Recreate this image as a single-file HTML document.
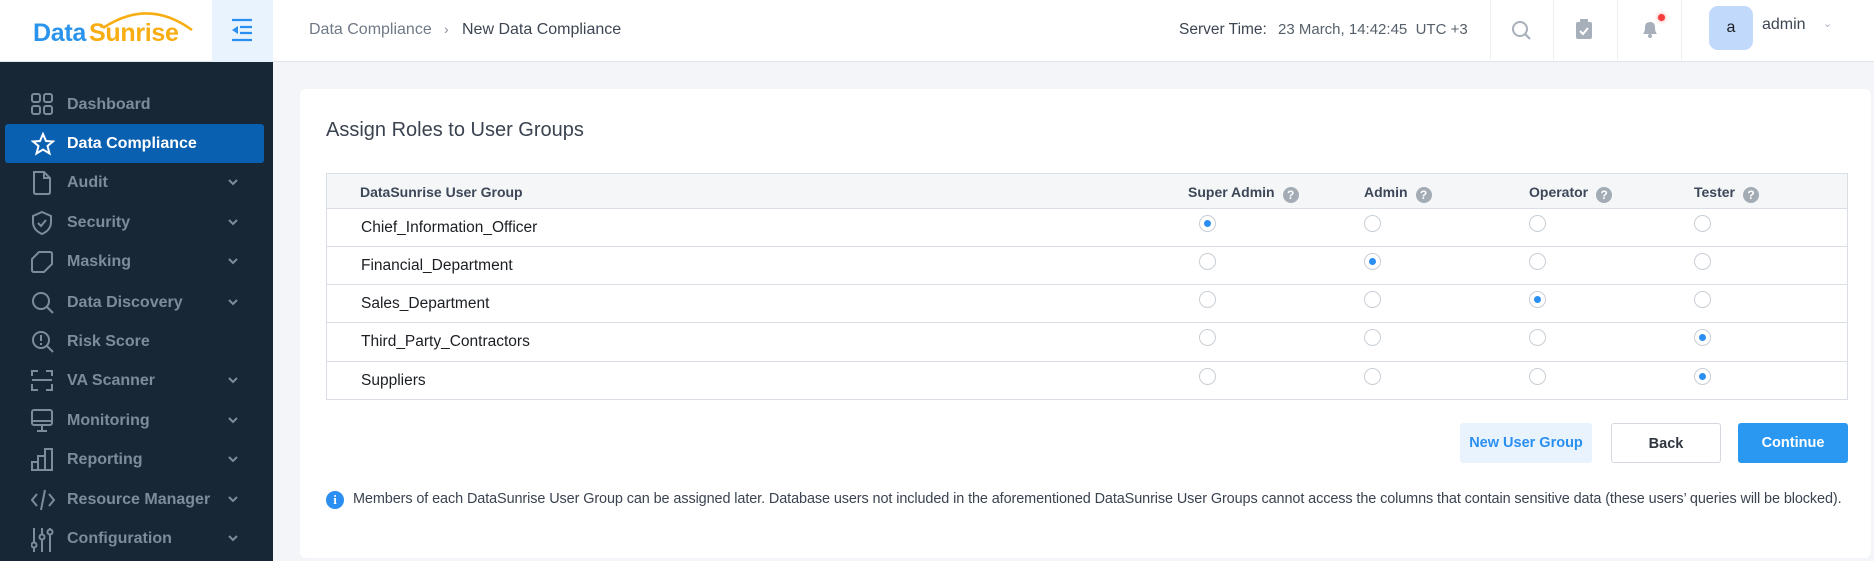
<!DOCTYPE html>
<html><head><meta charset="utf-8"><style>
*{box-sizing:border-box;margin:0;padding:0}
body{width:1874px;height:561px;overflow:hidden;background:#f3f5f8;font-family:"Liberation Sans",sans-serif;position:relative}
.abs{position:absolute}
#hdr{left:0;top:0;width:1874px;height:62px;background:#fff;border-bottom:1px solid #e2e6ea}
#side{left:0;top:62px;width:273px;height:499px;background:#182736}
.mi{position:absolute;left:0;width:273px;height:39px;color:#7d8c9b;font-size:16px;font-weight:bold}
.mi span{position:absolute;left:67px;top:11px}
.mi svg.ic{position:absolute;left:31px;top:8px}
.mi .ch{position:absolute;left:228px;top:15px}
.act{left:5px !important;width:259px !important;background:#0a60b0;border-radius:3px;color:#fff}
.act span{left:62px}
.act svg.ic{left:26px}
#card{left:300px;top:89px;width:1571px;height:469px;background:#fff;border-radius:6px}
.row{position:absolute;left:326px;width:1522px;border:1px solid #d9dfe5;border-top:none}
.txt{position:absolute;font-size:15.5px;color:#1b1e22;left:34px}
.rad{position:absolute;width:17px;height:17px;border:1px solid #c9cfd5;border-radius:50%;background:#fff}
.rad.on::after{content:"";position:absolute;left:4px;top:4px;width:7px;height:7px;border-radius:50%;background:#2a8ff0}
.hl{position:absolute;top:10px;font-size:14px;font-weight:bold;color:#3d4757}
.q{display:inline-block;width:16px;height:16px;border-radius:50%;background:#a3abb5;color:#fff;font-size:12px;text-align:center;line-height:16px;margin-left:8px;vertical-align:-2px}
.btn{position:absolute;top:423px;height:40px;border-radius:3px;font-size:14.5px;font-weight:bold;text-align:center;line-height:40px}
.dv{position:absolute;top:0;width:1px;height:60px;background:#eef0f3}
</style></head><body>
<div id="hdr" class="abs">
  <div class="abs" style="left:33px;top:19px;font-size:25px;font-weight:bold;letter-spacing:-0.3px"><span style="color:#2a93ec">Data</span><span style="color:#f8ad12;margin-left:3px">Sunrise</span></div>
  <svg class="abs" style="left:100px;top:6px" width="96" height="30"><path d="M3 22 Q48 -8 92 24" fill="none" stroke="#f8ad12" stroke-width="2.6"/></svg>
  <div class="abs" style="left:212px;top:0;width:61px;height:62px;background:#e9f3fd"></div>
  <svg class="abs" style="left:230px;top:18px" width="24" height="24"><path d="M2 2H22M10 9H22M10 15H22M2 22H22" stroke="#2a8ff0" stroke-width="2.2"/><path d="M2 12L8 8V16Z" fill="#2a8ff0"/></svg>
  <div class="abs" style="left:309px;top:21px;font-size:16px;color:#6f7a86">Data Compliance</div>
  <div class="abs" style="left:444px;top:21px;font-size:14px;color:#8a939d">›</div>
  <div class="abs" style="left:462px;top:21px;font-size:16px;color:#3d4652">New Data Compliance</div>
  <div class="abs" style="left:1179px;top:21px;font-size:15.5px;color:#3d4652">Server Time:</div>
  <div class="abs" style="left:1278px;top:21px;font-size:15px;color:#56606b">23 March, 14:42:45&nbsp; UTC +3</div>
  <div class="dv" style="left:1490px"></div><div class="dv" style="left:1553px"></div><div class="dv" style="left:1617px"></div><div class="dv" style="left:1681px"></div>
  <svg class="abs" style="left:1511px;top:20px" width="22" height="22"><circle cx="9" cy="9" r="7" fill="none" stroke="#a7b0ba" stroke-width="2"/><path d="M14 14L19 19" stroke="#a7b0ba" stroke-width="2.2"/></svg>
  <svg class="abs" style="left:1576px;top:19px" width="16" height="20"><rect x="0" y="3" width="16" height="17" rx="2" fill="#a7b0ba"/><rect x="4" y="0" width="8" height="5" rx="1" fill="#a7b0ba"/><path d="M4 12L7 15L12 9" fill="none" stroke="#fff" stroke-width="2"/></svg>
  <svg class="abs" style="left:1640px;top:19px" width="20" height="20"><path d="M3 15Q5 13 5 8Q5 3 10 3Q15 3 15 8Q15 13 17 15Z" fill="#a7b0ba"/><circle cx="10" cy="17" r="2" fill="#a7b0ba"/></svg>
  <div class="abs" style="left:1658px;top:14px;width:7px;height:7px;border-radius:50%;background:#f53b3b;box-shadow:0 0 4px #f88"></div>
  <div class="abs" style="left:1709px;top:6px;width:44px;height:44px;border-radius:9px;background:#c1d9fb;text-align:center;line-height:44px;font-size:16px;color:#1b1e22">a</div>
  <div class="abs" style="left:1762px;top:16px;font-size:16px;color:#3d4652">admin</div>
  <div class="abs" style="left:1823px;top:17px;font-size:11px;color:#a7b0ba">&#8964;</div>
</div>
<div id="side" class="abs">
  <div class="mi" style="top:23px"><svg class="ic" width="22" height="22" fill="none" stroke="#7d8c9b" stroke-width="2"><rect x="1" y="1" width="8" height="8" rx="2"/><rect x="13" y="1" width="8" height="8" rx="2"/><rect x="1" y="13" width="8" height="8" rx="2"/><rect x="13" y="13" width="8" height="8" rx="2"/></svg><span>Dashboard</span></div>
  <div class="mi act" style="top:62px"><svg class="ic" width="24" height="24" fill="none" stroke="#fff" stroke-width="2"><path d="M12 2L15 9L22 9.5L16.5 14L18.5 21.5L12 17.5L5.5 21.5L7.5 14L2 9.5L9 9Z"/></svg><span>Data Compliance</span></div>
  <div class="mi" style="top:101px"><svg class="ic" width="22" height="24" fill="none" stroke="#7d8c9b" stroke-width="2"><path d="M3 1H13L19 7V21Q19 23 17 23H5Q3 23 3 21Z M13 1V7H19"/></svg><span>Audit</span><svg class="ch" width="10" height="8"><path d="M1 2L5 6L9 2" stroke="#7d8c9b" stroke-width="2" fill="none"/></svg></div>
  <div class="mi" style="top:141px"><svg class="ic" width="22" height="24" fill="none" stroke="#7d8c9b" stroke-width="2"><path d="M11 1L20 5V11Q20 19 11 23Q2 19 2 11V5Z"/><path d="M7 12L10 15L15 9"/></svg><span>Security</span><svg class="ch" width="10" height="8"><path d="M1 2L5 6L9 2" stroke="#7d8c9b" stroke-width="2" fill="none"/></svg></div>
  <div class="mi" style="top:180px"><svg class="ic" width="22" height="24" fill="none" stroke="#7d8c9b" stroke-width="2"><path d="M8 2H19Q21 2 21 4V14L13 22H3Q1 22 1 20V9Z"/></svg><span>Masking</span><svg class="ch" width="10" height="8"><path d="M1 2L5 6L9 2" stroke="#7d8c9b" stroke-width="2" fill="none"/></svg></div>
  <div class="mi" style="top:221px"><svg class="ic" width="24" height="24" fill="none" stroke="#7d8c9b" stroke-width="2"><circle cx="10" cy="10" r="8"/><path d="M16 16L22 22"/></svg><span>Data Discovery</span><svg class="ch" width="10" height="8"><path d="M1 2L5 6L9 2" stroke="#7d8c9b" stroke-width="2" fill="none"/></svg></div>
  <div class="mi" style="top:260px"><svg class="ic" width="24" height="24" fill="none" stroke="#7d8c9b" stroke-width="2"><circle cx="10" cy="10" r="8"/><path d="M16 16L22 22M10 5V11M10 13V15"/></svg><span>Risk Score</span></div>
  <div class="mi" style="top:299px"><svg class="ic" width="24" height="24" fill="none" stroke="#7d8c9b" stroke-width="2"><path d="M1 7V2H7M15 2H21V7M21 15V21H15M7 21H1V15M1 11H21"/></svg><span>VA Scanner</span><svg class="ch" width="10" height="8"><path d="M1 2L5 6L9 2" stroke="#7d8c9b" stroke-width="2" fill="none"/></svg></div>
  <div class="mi" style="top:339px"><svg class="ic" width="24" height="24" fill="none" stroke="#7d8c9b" stroke-width="2"><rect x="1" y="1" width="20" height="15" rx="2"/><path d="M1 12H21M11 16V21M6 22H16"/></svg><span>Monitoring</span><svg class="ch" width="10" height="8"><path d="M1 2L5 6L9 2" stroke="#7d8c9b" stroke-width="2" fill="none"/></svg></div>
  <div class="mi" style="top:378px"><svg class="ic" width="24" height="24" fill="none" stroke="#7d8c9b" stroke-width="2"><path d="M1 22V14H7V22ZM7 22V8H14V22ZM14 22V1H21V22Z"/></svg><span>Reporting</span><svg class="ch" width="10" height="8"><path d="M1 2L5 6L9 2" stroke="#7d8c9b" stroke-width="2" fill="none"/></svg></div>
  <div class="mi" style="top:418px"><svg class="ic" width="24" height="24" fill="none" stroke="#7d8c9b" stroke-width="2"><path d="M6 6L1 12L6 18M18 6L23 12L18 18M14 2L10 22"/></svg><span>Resource Manager</span><svg class="ch" width="10" height="8"><path d="M1 2L5 6L9 2" stroke="#7d8c9b" stroke-width="2" fill="none"/></svg></div>
  <div class="mi" style="top:457px"><svg class="ic" width="24" height="26" fill="none" stroke="#7d8c9b" stroke-width="2"><path d="M3 1V25M11 1V25M19 1V25"/><circle cx="3" cy="18" r="2.5" fill="#182736"/><circle cx="11" cy="10" r="2.5" fill="#182736"/><circle cx="19" cy="5" r="2.5" fill="#182736"/></svg><span>Configuration</span><svg class="ch" width="10" height="8"><path d="M1 2L5 6L9 2" stroke="#7d8c9b" stroke-width="2" fill="none"/></svg></div>
</div>
<div id="card" class="abs"></div>
<div class="abs" style="left:326px;top:119px;font-size:20px;color:#3b4350">Assign Roles to User Groups</div>
<div class="row" style="top:173px;height:36px;background:#f4f6f8;border-top:1px solid #d9dfe5">
  <div class="hl" style="left:33px">DataSunrise User Group</div>
  <div class="hl" style="left:861px">Super Admin<span class="q">?</span></div>
  <div class="hl" style="left:1037px">Admin<span class="q">?</span></div>
  <div class="hl" style="left:1202px">Operator<span class="q">?</span></div>
  <div class="hl" style="left:1367px">Tester<span class="q">?</span></div>
</div>
<div class="row" style="top:209px;height:38px"><div class="txt" style="top:10px">Chief_Information_Officer</div><div class="rad on" style="left:872px;top:6px"></div><div class="rad" style="left:1037px;top:6px"></div><div class="rad" style="left:1202px;top:6px"></div><div class="rad" style="left:1367px;top:6px"></div></div>
<div class="row" style="top:247px;height:38px"><div class="txt" style="top:10px">Financial_Department</div><div class="rad" style="left:872px;top:6px"></div><div class="rad on" style="left:1037px;top:6px"></div><div class="rad" style="left:1202px;top:6px"></div><div class="rad" style="left:1367px;top:6px"></div></div>
<div class="row" style="top:285px;height:38px"><div class="txt" style="top:10px">Sales_Department</div><div class="rad" style="left:872px;top:6px"></div><div class="rad" style="left:1037px;top:6px"></div><div class="rad on" style="left:1202px;top:6px"></div><div class="rad" style="left:1367px;top:6px"></div></div>
<div class="row" style="top:323px;height:39px"><div class="txt" style="top:10px">Third_Party_Contractors</div><div class="rad" style="left:872px;top:6px"></div><div class="rad" style="left:1037px;top:6px"></div><div class="rad" style="left:1202px;top:6px"></div><div class="rad on" style="left:1367px;top:6px"></div></div>
<div class="row" style="top:362px;height:38px"><div class="txt" style="top:10px">Suppliers</div><div class="rad" style="left:872px;top:6px"></div><div class="rad" style="left:1037px;top:6px"></div><div class="rad" style="left:1202px;top:6px"></div><div class="rad on" style="left:1367px;top:6px"></div></div>
<div class="btn" style="left:1460px;width:132px;background:#e9f3fd;color:#2a8ff0">New User Group</div>
<div class="btn" style="left:1611px;width:110px;border:1px solid #d3d9df;color:#2f3640;background:#fff">Back</div>
<div class="btn" style="left:1738px;width:110px;background:#2a98f0;color:#fff">Continue</div>
<div class="abs" style="left:326px;top:491px;width:18px;height:18px;border-radius:50%;background:#2a8ff0;color:#fff;font-size:13px;font-weight:bold;text-align:center;line-height:18px;font-family:'Liberation Serif',serif">i</div>
<div class="abs" style="left:353px;top:491px;font-size:14.45px;color:#3b4350;white-space:nowrap;letter-spacing:-0.1px">Members of each DataSunrise User Group can be assigned later. Database users not included in the aforementioned DataSunrise User Groups cannot access the columns that contain sensitive data (these users’ queries will be blocked).</div>
</body></html>
